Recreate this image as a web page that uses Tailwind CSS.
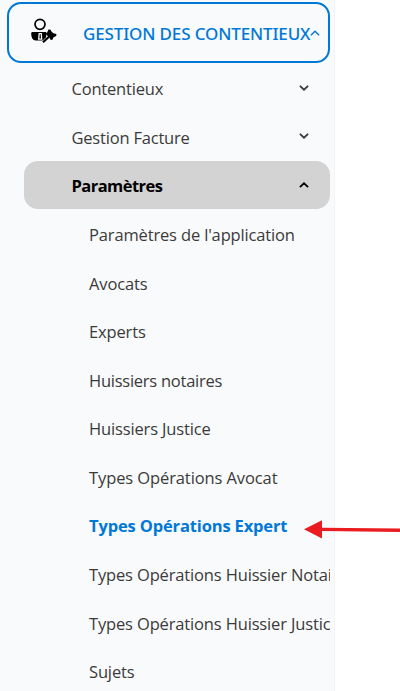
<!DOCTYPE html>
<html lang="fr">
<head>
    <meta charset="UTF-8">
    <meta name="viewport" content="width=device-width, initial-scale=1.0">
    <title>Gestion des contentieux</title>
    <script src="https://cdn.jsdelivr.net/npm/@tailwindcss/browser@4"></script>
</head>
<body class="relative bg-white h-[691px] overflow-hidden font-['Open_Sans','Noto_Sans',sans-serif] text-[#3b3a39]">
    <aside class="w-[335px] h-full bg-[#f8fafc] border-r border-[#f3f3f5] pt-[2px] overflow-hidden">
        <button class="ml-[7px] w-[323px] h-[61px] flex items-center border-2 border-[#0078d7] rounded-[14px] pl-[22px] text-[#0078d7]">
            <!-- personne avec marteau de juge -->
            <svg class="w-[26px] h-[26px] shrink-0 -mt-[3px]" viewBox="0 0 26 26">
                <circle cx="9" cy="6.3" r="5" fill="none" stroke="#000" stroke-width="1.7"/>
                <path fill="#000" d="M1.6 14h13.6v8.6H4.6C1.6 22 .2 19.4.2 15.4c0-.8.6-1.4 1.4-1.4z"/>
                <path fill="#fff" d="M7.6 15h3.2l.6 6.8H7z"/>
                <path fill="#000" d="M8.8 16h.8l.4 4.6H8.4z"/>
                <path stroke="#f8fafc" stroke-width="4.2" d="M12 25l7.5-7"/>
                <path stroke="#000" stroke-width="2.2" d="M12 24.2l7-6.4"/>
                <path fill="#000" d="M14.2 15.6l2-1.2 1.2-3 2.2.4 1 2 1.8 1.4 3 .8-.2 2-2.6 1.2-1.4 2.8-2-.4-.8-2.4-2-1.4z"/>
            </svg>
            <span class="ml-[26px] w-[227px] shrink-0 text-left whitespace-nowrap font-['Noto_Sans','Open_Sans',sans-serif] text-[17px] font-medium tracking-[-0.14px] pt-[3px]">GESTION DES CONTENTIEUX</span>
            <svg class="w-[10px] h-[6px] shrink-0" viewBox="0 0 10 6" fill="none" stroke="currentColor" stroke-width="1.4"><path d="M.9 5.2L5 1.2l4.1 4"/></svg>
        </button>

        <nav class="ml-6 w-[306px] pt-[1px] text-[16.5px] overflow-hidden">
            <a class="flex h-[48.5px] items-center justify-between pl-[47.5px] pr-[21px]">
                <span class="tracking-[-0.2px] pt-[2px]">Contentieux</span>
                <svg class="w-[10px] h-[6px] -mt-[1px]" viewBox="0 0 10 6" fill="none" stroke="currentColor" stroke-width="1.8"><path d="M.9.9L5 4.7 9.1.9"/></svg>
            </a>
            <a class="flex h-[48.5px] items-center justify-between pl-[47.5px] pr-[21px]">
                <span class="tracking-[-0.2px] pt-[3px]">Gestion Facture</span>
                <svg class="w-[10px] h-[6px] -mt-[2px]" viewBox="0 0 10 6" fill="none" stroke="currentColor" stroke-width="1.8"><path d="M.9.9L5 4.7 9.1.9"/></svg>
            </a>
            <a class="flex h-[48px] items-center justify-between pl-[47.5px] pr-[21px] bg-[#d3d3d3] rounded-[14px] text-black font-bold">
                <span class="tracking-[-0.55px] pt-[3px]">Paramètres</span>
                <svg class="w-[10px] h-[6px]" viewBox="0 0 10 6" fill="none" stroke="currentColor" stroke-width="1.8"><path d="M.9 5.1L5 1.3l4.1 3.8"/></svg>
            </a>
            <ul class="pl-[65px] pt-[2px] whitespace-nowrap tracking-[-0.15px]">
                <li class="flex h-[48.6px] items-center">Paramètres de l'application</li>
                <li class="flex h-[48.6px] items-center">Avocats</li>
                <li class="flex h-[48.6px] items-center">Experts</li>
                <li class="flex h-[48.6px] items-center tracking-[-0.25px]">Huissiers notaires</li>
                <li class="flex h-[48.6px] items-center">Huissiers Justice</li>
                <li class="flex h-[48.6px] items-center tracking-[-0.1px]">Types Opérations Avocat</li>
                <li class="flex h-[48.6px] items-center font-bold tracking-[-0.15px] text-[#0078d7]">Types Opérations Expert</li>
                <li class="flex h-[48.6px] items-center">Types Opérations Huissier Notaire</li>
                <li class="flex h-[48.6px] items-center">Types Opérations Huissier Justice</li>
                <li class="flex h-[48.6px] items-center">Sujets</li>
            </ul>
        </nav>
    </aside>

    <!-- flèche vers l'entrée active -->
    <svg class="absolute left-[304px] top-[520px] w-[96px] h-[19px]" viewBox="0 0 96 19">
        <path fill="#ea1c1f" d="M0 9.3L18 .3v7.4l78 .9v3.4l-78-1v7.4z"/>
    </svg>
</body>
</html>
